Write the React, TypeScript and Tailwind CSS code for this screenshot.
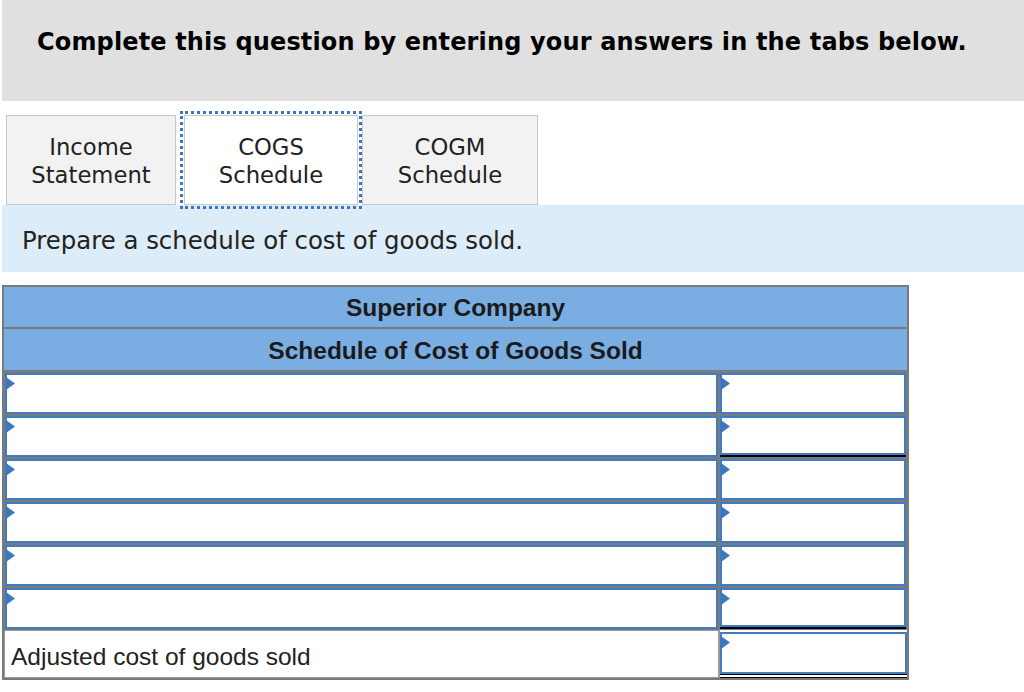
import React from 'react';

const verdana = { fontFamily: '"DejaVu Sans", Verdana, sans-serif' };
const arial = { fontFamily: '"Liberation Sans", Arial, sans-serif' };

// small blue marker at the top-left corner of each input cell
const Marker = () => (
  <svg className="absolute left-[-1px] top-[2px]" width="9" height="13" viewBox="0 0 9 13">
    <polygon points="0,0 9,6.5 0,13" fill="#3c78c0" />
  </svg>
);

const InputCell = ({ underline }: { underline?: 'single' | 'double' }) => (
  <div className="flex h-full flex-col">
    <div className="relative flex-1 border-2 border-[#3f7cc2] bg-white">
      <Marker />
    </div>
    {underline === 'single' && <div className="h-[2px] bg-black" />}
    {underline === 'double' && <div className="h-[4px] border-y-[1.5px] border-black bg-white" />}
  </div>
);

const rows: Array<'single' | undefined> = [undefined, 'single', undefined, undefined, undefined, 'single'];

export default function App() {
  return (
    <div className="h-[692px] w-[1024px] overflow-hidden bg-white text-[#111]">
      {/* question header */}
      <div className="ml-[2px] h-[101px] bg-[#e0e0e0] pl-[35px] pt-[27px]" style={verdana}>
        <p className="text-[24px] font-bold leading-[30px] tracking-[0.15px] text-black">
          Complete this question by entering your answers in the tabs below.
        </p>
      </div>

      {/* tabs */}
      <div className="ml-[6px] mt-[14px] flex" style={verdana}>
        <div className="flex h-[90px] w-[170px] items-center justify-center border border-[#c9c9c9] bg-[#f2f2f2] pt-[2px] text-center text-[22.7px] leading-[28px] text-[#222]">
          Income<br />Statement
        </div>
        <div className="relative z-10 ml-[8px] flex h-[90px] w-[174px] items-center justify-center border border-[#c9c9c9] bg-white pt-[2px] text-center text-[22.7px] leading-[28px] text-[#222] outline-3 outline-offset-1 outline-dotted outline-[#3a76c2]">
          COGS<br />Schedule
        </div>
        <div className="ml-[4px] flex h-[90px] w-[176px] items-center justify-center border border-[#c9c9c9] bg-[#f2f2f2] pt-[2px] text-center text-[22.7px] leading-[28px] text-[#222]">
          COGM<br />Schedule
        </div>
      </div>

      {/* instructions */}
      <div className="ml-[2px] flex h-[67px] items-center bg-[#dcecf8] pl-[20px] pt-[5px]" style={verdana}>
        <p className="text-[24.4px] text-[#222]">Prepare a schedule of cost of goods sold.</p>
      </div>

      {/* schedule table */}
      <div className="ml-[2px] mt-[13px] w-[907px] border-2 border-[#7a7a7a]" style={arial}>
        <div className="flex h-[42px] items-center justify-center border-b-2 border-[#7a7a7a] bg-[#7aaee3] pt-[2px] text-[24.5px] font-bold text-[#1b1b1b]">
          Superior Company
        </div>
        <div className="flex h-[43px] items-center justify-center border-b-2 border-[#7a7a7a] bg-[#7aaee3] pt-[4px] text-[24.5px] font-bold text-[#1b1b1b]">
          Schedule of Cost of Goods Sold
        </div>

        {rows.map((u, i) => (
          <div key={i} className="flex h-[43px]">
            <div className="w-[715px] border border-[#7a7a7a]">
              <InputCell />
            </div>
            <div className="flex-1 border border-[#7a7a7a]">
              <InputCell underline={u} />
            </div>
          </div>
        ))}

        <div className="flex h-[48px]">
          <div className="flex w-[715px] items-center border border-[#9a9a9a] bg-white pl-[6px] pt-[7px] text-[24.5px] text-[#222]">
            Adjusted cost of goods sold
          </div>
          <div className="flex-1 border-l border-[#9a9a9a] pt-[2px]">
            <InputCell underline="double" />
          </div>
        </div>
      </div>
    </div>
  );
}
